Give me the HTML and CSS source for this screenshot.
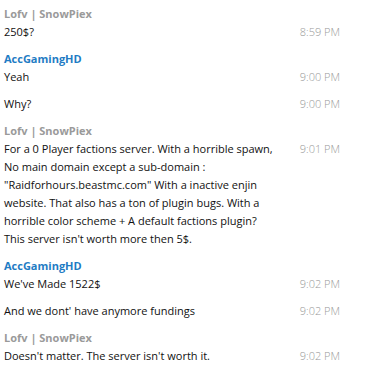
FILE: index.html
```html
<!DOCTYPE html>
<html lang="en">
<head>
    <meta charset="UTF-8">
    <title>Chat</title>
    <link rel="stylesheet" href="styles.css">
</head>
<body>
    <div class="chat">
        <div class="group">
            <div class="name">Lofv | SnowPiex</div>
            <div class="msg"><div class="text">250$?</div><div class="time">8:59 PM</div></div>
        </div>
        <div class="group">
            <div class="name blue">AccGamingHD</div>
            <div class="msg"><div class="text">Yeah</div><div class="time">9:00 PM</div></div>
            <div class="msg"><div class="text">Why?</div><div class="time">9:00 PM</div></div>
        </div>
        <div class="group">
            <div class="name">Lofv | SnowPiex</div>
            <div class="msg">
                <div class="text">For a 0 Player factions server. With a horrible spawn,<br>No main domain except a sub-domain :<br>"Raidforhours.beastmc.com" With a inactive enjin<br>website. That also has a ton of plugin bugs. With a<br>horrible color scheme + A default factions plugin?<br>This server isn't worth more then 5$.</div>
                <div class="time">9:01 PM</div>
            </div>
        </div>
        <div class="group">
            <div class="name blue">AccGamingHD</div>
            <div class="msg"><div class="text">We've Made 1522$</div><div class="time">9:02 PM</div></div>
            <div class="msg"><div class="text">And we dont' have anymore fundings</div><div class="time">9:02 PM</div></div>
        </div>
        <div class="group">
            <div class="name">Lofv | SnowPiex</div>
            <div class="msg"><div class="text">Doesn't matter. The server isn't worth it.</div><div class="time">9:02 PM</div></div>
        </div>
    </div>
</body>
</html>
```

FILE: styles.css
```css
body {
    margin: 0;
    background-color: #fff;
    font-family: "Open Sans", Arial, sans-serif;
    font-size: 11px;
    color: #111;
}
.chat {
    padding: 5px 33px 0 4px;
}
.name {
    font-weight: bold;
    color: #9a9a9a;
    line-height: 18px;
}
.name.blue {
    color: #1f7cc4;
}
.msg {
    display: flex;
    line-height: 18px;
    margin-bottom: 9px;
}
.text {
    width: 288px;
    white-space: nowrap;
}
.time {
    flex: 1;
    text-align: right;
    color: #999;
    font-weight: 300;
}
```
